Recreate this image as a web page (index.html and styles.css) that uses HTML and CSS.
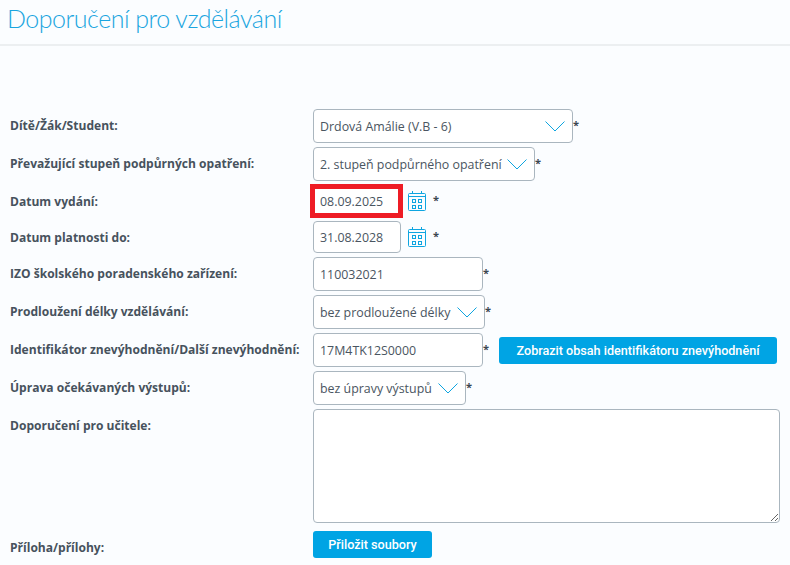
FILE: index.html
```html
<!DOCTYPE html>
<html lang="cs">
<head>
    <meta charset="UTF-8">
    <meta name="viewport" content="width=device-width, initial-scale=1.0">
    <title>Doporučení pro vzdělávání</title>
    <link rel="stylesheet" href="styles.css">
</head>
<body>
    <header class="page-header">
        <h1>Doporučení pro vzdělávání</h1>
    </header>

    <form class="form">
        <div class="row">
            <label class="label">Dítě/Žák/Student:</label>
            <select class="field select w-260"><option>Drdová Amálie (V.B - 6)</option></select>
            <span class="req">*</span>
        </div>
        <div class="row">
            <label class="label">Převažující stupeň podpůrných opatření:</label>
            <select class="field select w-222"><option>2. stupeň podpůrného opatření</option></select>
            <span class="req">*</span>
        </div>
        <div class="row">
            <label class="label">Datum vydání:</label>
            <span class="marked">
                <input class="field date" type="text" value="08.09.2025">
                <span class="mark"></span>
            </span>
            <svg class="cal" width="18" height="20"><use href="#cal"></use></svg>
            <span class="req req-date">*</span>
        </div>
        <div class="row">
            <label class="label">Datum platnosti do:</label>
            <input class="field date" type="text" value="31.08.2028">
            <svg class="cal" width="18" height="20"><use href="#cal"></use></svg>
            <span class="req req-date">*</span>
        </div>
        <div class="row">
            <label class="label">IZO školského poradenského zařízení:</label>
            <input class="field w-170" type="text" value="110032021">
            <span class="req">*</span>
        </div>
        <div class="row">
            <label class="label">Prodloužení délky vzdělávání:</label>
            <select class="field select w-172"><option>bez prodloužené délky</option></select>
            <span class="req">*</span>
        </div>
        <div class="row">
            <label class="label">Identifikátor znevýhodnění/Další znevýhodnění:</label>
            <input class="field w-170" type="text" value="17M4TK12S0000">
            <span class="req">*</span>
            <button class="btn btn-wide" type="button">Zobrazit obsah identifikátoru znevýhodnění</button>
        </div>
        <div class="row">
            <label class="label">Úprava očekávaných výstupů:</label>
            <select class="field select w-153"><option>bez úpravy výstupů</option></select>
            <span class="req">*</span>
        </div>
        <div class="row">
            <label class="label">Doporučení pro učitele:</label>
            <textarea class="field note"></textarea>
        </div>
        <div class="row row-files">
            <label class="label">Příloha/přílohy:</label>
            <button class="btn btn-files" type="button">Přiložit soubory</button>
        </div>
    </form>

    <svg class="defs" width="0" height="0">
        <symbol id="cal" viewBox="0 0 18 20">
            <g fill="none" stroke="#0ea5e0" stroke-width="1">
                <rect x="0.5" y="2.5" width="17" height="17" rx="1"/>
                <path d="M0.5 5.5H17.5M4.5 0V3M13.5 0V3"/>
                <rect x="4.5" y="8.5" width="3" height="3"/>
                <rect x="10.5" y="8.5" width="3" height="3"/>
                <rect x="4.5" y="14.5" width="3" height="3"/>
                <rect x="10.5" y="14.5" width="3" height="3"/>
            </g>
        </symbol>
    </svg>
</body>
</html>
```

FILE: styles.css
```css
* {
    box-sizing: border-box;
}
body {
    margin: 0;
    background: #fbfdff;
    color: #4a5561;
    font-family: "Open Sans", Arial, sans-serif;
    font-size: 13px;
    overflow: hidden;
}
.page-header {
    height: 46px;
    padding: 0 7px;
    border-bottom: 2px solid #eceff1;
}
h1 {
    margin: 0;
    font-family: Lato, Arial, sans-serif;
    font-size: 25px;
    font-weight: 300;
    letter-spacing: -0.5px;
    line-height: 37px;
    color: #1aa5e0;
}
.form {
    display: flex;
    flex-direction: column;
    gap: 4px;
    padding: 63px 10px 0;
}
.row {
    display: flex;
    align-items: flex-start;
}
.row-files {
    margin-top: 4px;
}
.label {
    flex: 0 0 303px;
    padding-top: 8px;
    font-weight: 700;
    font-size: 12.05px;
    line-height: 18px;
    color: #47525d;
}
.field {
    height: 34px;
    padding: 0 6px;
    border: 1px solid #aab6bf;
    border-radius: 4px;
    background-color: #fff;
    color: #4a5561;
    font-family: "Open Sans", Arial, sans-serif;
    font-size: 12.4px;
}
.select {
    appearance: none;
    padding-right: 28px;
    background-image: url("data:image/svg+xml,%3Csvg xmlns='http://www.w3.org/2000/svg' width='20' height='11'%3E%3Cpath d='M0.5 0.5L10 10L19.5 0.5' fill='none' stroke='%230ea5e0'/%3E%3C/svg%3E");
    background-repeat: no-repeat;
    background-position: right 7px center;
}
.w-260 { width: 260px; }
.w-222 { width: 222px; }
.w-172 { width: 172px; }
.w-170 { width: 170px; }
.w-153 { width: 153px; }
.date {
    width: 88px;
    height: 32px;
}
.marked {
    position: relative;
    display: flex;
}
.mark {
    position: absolute;
    inset: -1px -2px -1px -3px;
    border: 5px solid #ee1c25;
}
.cal {
    margin: 6px 0 0 7px;
}
.req {
    flex: 0 0 6px;
    min-width: 0;
    margin-top: 8px;
    color: #3c4650;
    font-size: 11px;
    font-weight: 700;
    line-height: 16px;
}
.req-date {
    margin: 7px 0 0 7px;
}
.btn {
    height: 27px;
    padding: 0;
    border: none;
    border-radius: 3px;
    background: #00a4e4;
    color: #fff;
    font-family: Roboto, Arial, sans-serif;
    font-size: 12.6px;
    font-weight: 500;
    white-space: nowrap;
}
.btn-wide {
    width: 278px;
    margin: 4px 0 0 10px;
}
.btn-files {
    width: 119px;
}
.note {
    width: 467px;
    height: 114px;
    padding: 6px;
}
.defs {
    position: absolute;
}
```
